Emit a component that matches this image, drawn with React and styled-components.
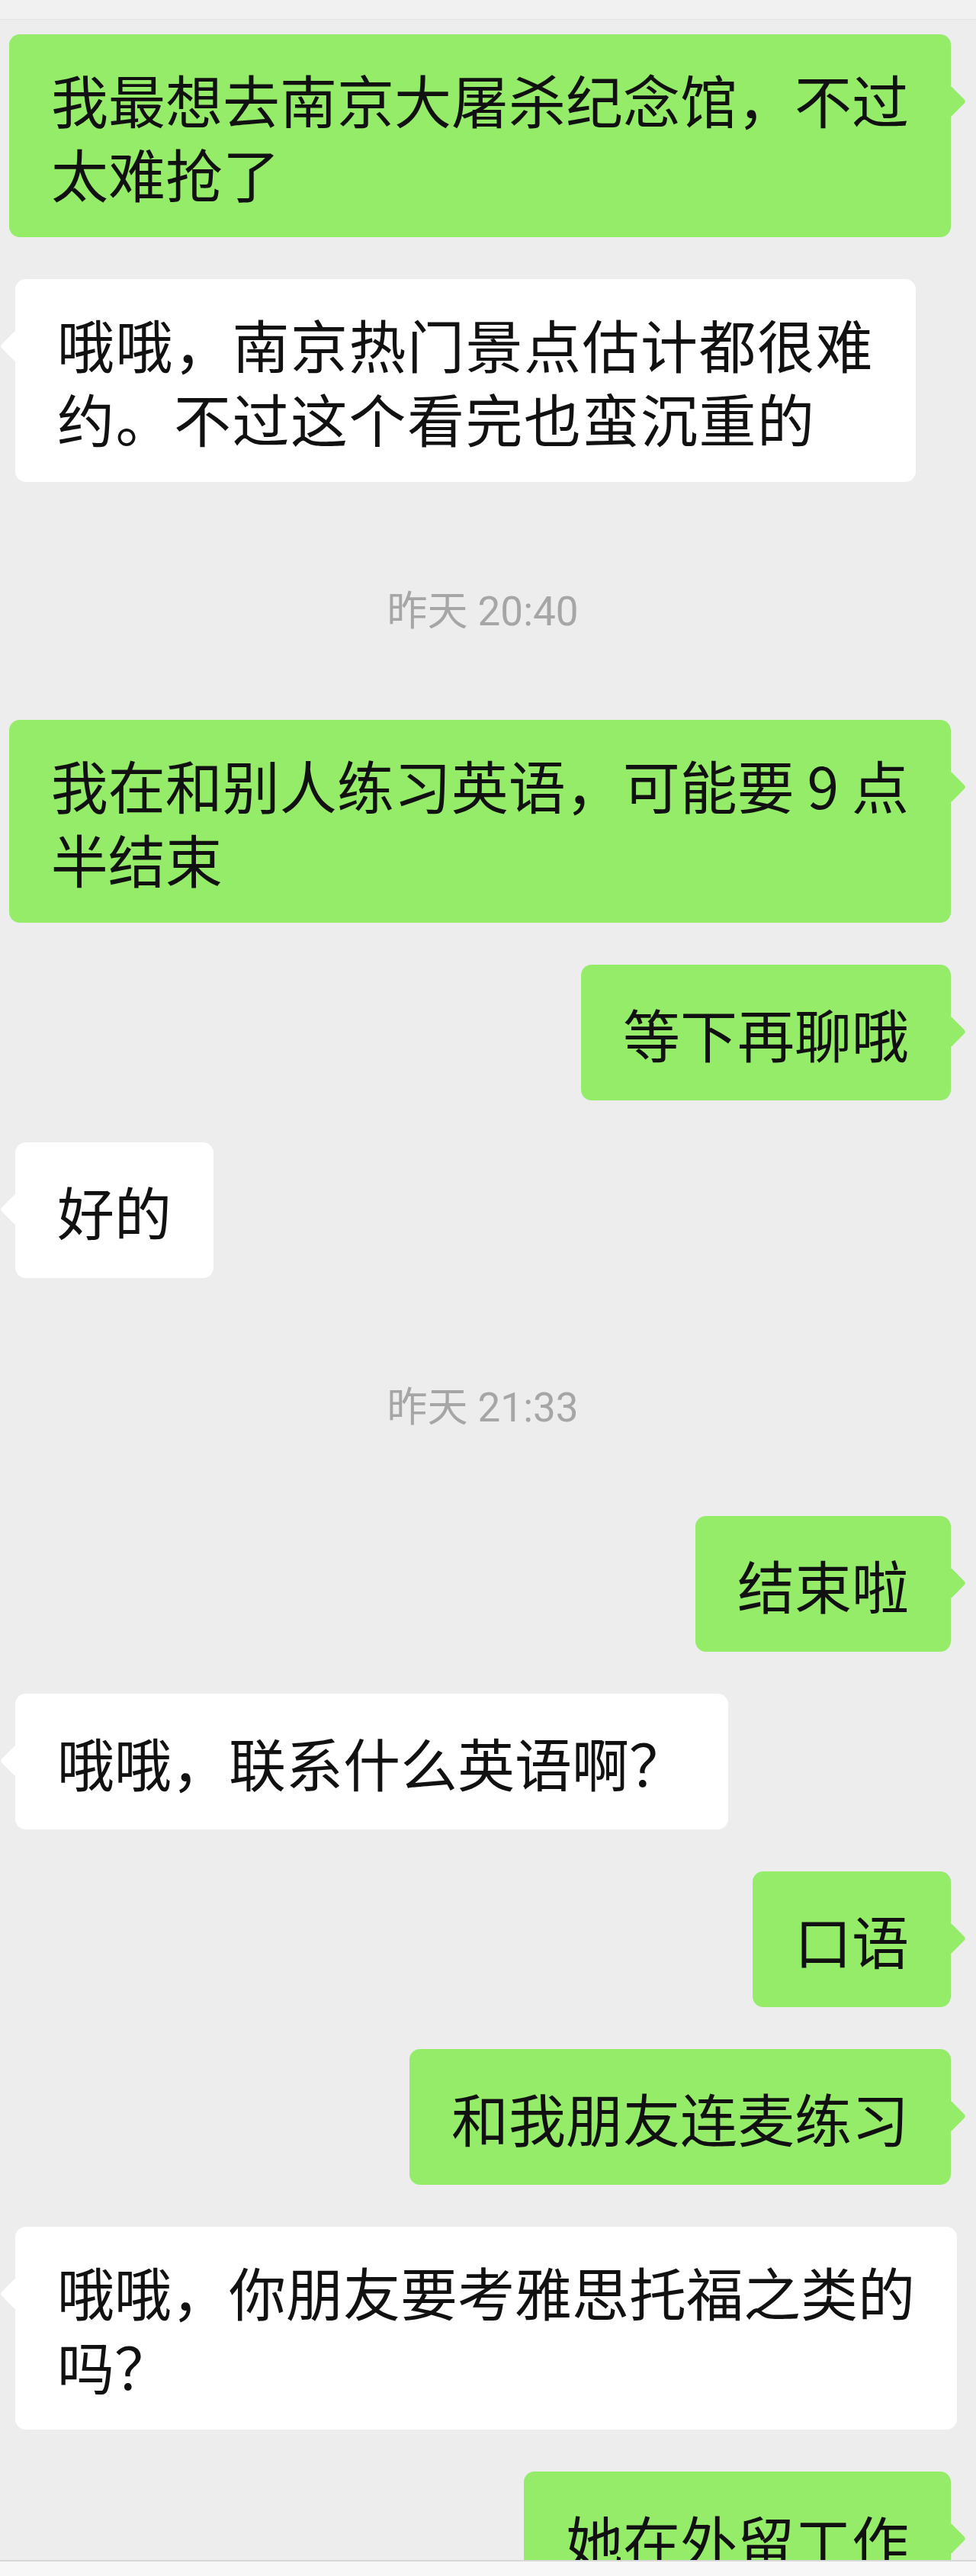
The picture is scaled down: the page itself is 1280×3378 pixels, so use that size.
import React from "react";
import styled, { createGlobalStyle, css } from "styled-components";

const GlobalStyle = createGlobalStyle`
  html, body {
    margin: 0;
    padding: 0;
    background: #ededed;
  }
  * { box-sizing: border-box; }
`;

const Page = styled.div`
  width: 1280px;
  height: 3378px;
  display: flex;
  flex-direction: column;
  background: #ededed;
  overflow: hidden;
  font-family: "Noto Sans CJK SC", "Noto Sans", sans-serif;
`;

const TopStrip = styled.div`
  flex: 0 0 26px;
  background: #f1f1f1;
  border-bottom: 1px solid #e4e4e4;
`;

const ChatList = styled.div`
  flex: 1 1 auto;
  min-height: 0;
  overflow: hidden;
  display: flex;
  flex-direction: column;
  gap: 55px;
  padding-top: 19px;
`;

const BottomBar = styled.div`
  flex: 0 0 21px;
  background: #f7f7f7;
  border-top: 2px solid #d8d8d8;
`;

const Row = styled.div`
  display: flex;
  flex-shrink: 0;
  justify-content: ${(p) => (p.$mine ? "flex-end" : "flex-start")};
  padding: ${(p) => (p.$mine ? "0 33px 0 0" : "0 0 0 20px")};
`;

const Bubble = styled.div`
  position: relative;
  display: flex;
  align-items: center;
  min-height: 178px;
  padding: 36px 55px;
  border-radius: 14px;
  background: ${(p) => (p.$mine ? "#95ec69" : "#ffffff")};
  color: #111111;
  font-size: 75px;
  line-height: 97px;
  letter-spacing: ${(p) => p.$tracking || 0}px;
  white-space: nowrap;

  &::after {
    content: "";
    position: absolute;
    top: 73px;
    width: 30px;
    height: 30px;
    border-radius: 4px;
    background: inherit;
    transform: rotate(45deg);
    ${(p) =>
      p.$mine
        ? css`
            right: -14px;
          `
        : css`
            left: -14px;
          `}
  }
`;

const Text = styled.span`
  position: relative;
  z-index: 1;
`;

const TimeRow = styled.div`
  flex-shrink: 0;
  height: 202px;
  padding: 85px 14px 0 0;
  display: flex;
  justify-content: center;
`;

const TimeLabel = styled.span`
  font-family: Roboto, "Noto Sans CJK SC", sans-serif;
  font-size: 53px;
  line-height: 60px;
  color: #a6a6a6;
`;

const items = [
  { mine: true, lines: ["我最想去南京大屠杀纪念馆，不过", "太难抢了"] },
  {
    mine: false,
    tracking: 1.5,
    lines: ["哦哦，南京热门景点估计都很难", "约。不过这个看完也蛮沉重的"],
  },
  { time: "昨天 20:40" },
  { mine: true, lines: ["我在和别人练习英语，可能要 9 点", "半结束"] },
  { mine: true, lines: ["等下再聊哦"] },
  { mine: false, lines: ["好的"] },
  { time: "昨天 21:33" },
  { mine: true, lines: ["结束啦"] },
  { mine: false, lines: ["哦哦，联系什么英语啊？"] },
  { mine: true, lines: ["口语"] },
  { mine: true, lines: ["和我朋友连麦练习"] },
  { mine: false, lines: ["哦哦，你朋友要考雅思托福之类的", "吗？"] },
  { mine: true, lines: ["她在外留工作"] },
];

export default function App() {
  return (
    <>
      <GlobalStyle />
      <Page>
        <TopStrip />
        <ChatList>
          {items.map((it, i) =>
            it.time ? (
              <TimeRow key={i}>
                <TimeLabel>{it.time}</TimeLabel>
              </TimeRow>
            ) : (
              <Row key={i} $mine={it.mine}>
                <Bubble $mine={it.mine} $tracking={it.tracking}>
                  <Text>
                    {it.lines.map((l, j) => (
                      <React.Fragment key={j}>
                        {j > 0 && <br />}
                        {l}
                      </React.Fragment>
                    ))}
                  </Text>
                </Bubble>
              </Row>
            )
          )}
        </ChatList>
        <BottomBar />
      </Page>
    </>
  );
}
